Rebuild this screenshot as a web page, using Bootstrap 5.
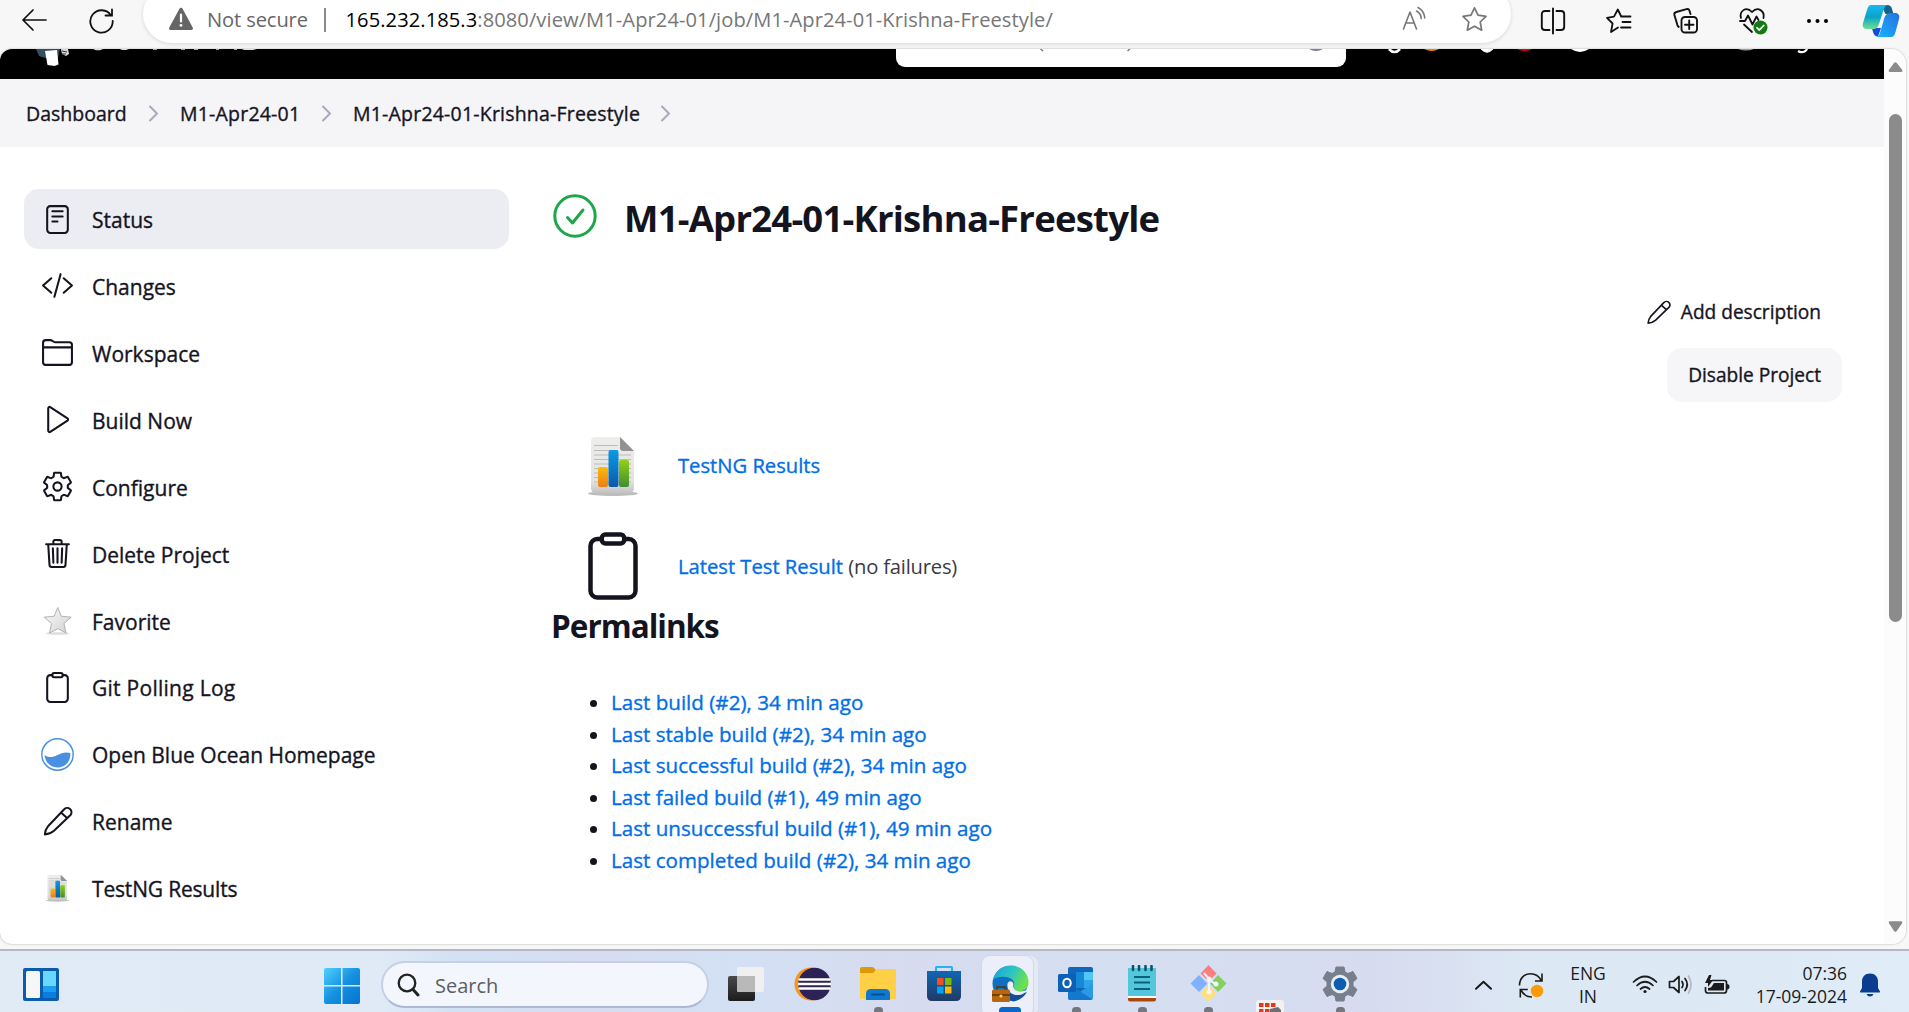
<!DOCTYPE html>
<html lang="en">
<head>
<meta charset="utf-8">
<meta name="viewport" content="width=device-width, initial-scale=1">
<title>M1-Apr24-01-Krishna-Freestyle [Jenkins]</title>
<link rel="stylesheet" href="https://cdn.jsdelivr.net/npm/bootstrap@5.3.0/dist/css/bootstrap.min.css">
<style>
body{height:1012px;overflow:hidden;background:#f7f7f7;color:#14141f;font-family:"Open Sans","Noto Sans",sans-serif;font-size:21px;line-height:1.5;white-space:nowrap}
svg{display:block;flex:none}
a{color:#006fe6;text-decoration:none;font-weight:500}
/* medium weight for links, menu entries and buttons */
a,.crumbs{-webkit-text-stroke:.35px currentColor}
.line-ico{fill:none;stroke:currentColor;stroke-width:32;stroke-linecap:round;stroke-linejoin:round}
/* browser toolbar */
.toolbar{height:49px;padding-left:21px}
.refresh-ico{margin-left:41px}
.address{width:1368px;height:58px;margin:-15px 0 6px 28px;padding:14px 23px 0 25px;border-radius:29px;background:#fff;box-shadow:0 1px 4px rgba(0,0,0,.13);font-size:20.1px}
.address-row{height:40px}
.address-row span{padding-top:2px}
.not-secure{color:#666;margin-left:13px;width:101px;letter-spacing:-.1px}
.addr-sep{width:1.5px;height:24px;background:#8a8a8a;margin:2px 20px 0 16px}
.url{color:#767676;letter-spacing:.08px}
.url b{font-weight:400;color:#000}
.tools{height:41px}
/* page frame */
.page-frame{width:1906px;height:895px;background:#fff;border-radius:12px 15px 14px 12px;box-shadow:0 0 2px rgba(0,0,0,.35);overflow:hidden}
.page-body{width:1884px}
.top-header{height:30px;background:#000;overflow:hidden}
.crumbs{height:68px;background:#f5f5f8;padding-left:26px;font-size:19.5px;font-weight:500}
.crumbs span{padding-top:2px}
.crumbs span+svg+span{letter-spacing:.2px}
.crumbs svg{margin:0 21px 0 22px}
.side{width:485px;margin:42px 0 0 24px;gap:6.9px}
.task-link{height:60px;border-radius:15px;padding-left:17px;gap:18px;color:#14141f;font-weight:500}
.task-link.current{background:#ecedf3}
.task-link span{padding-top:4px}
.wider{letter-spacing:.27px}
.tighter{letter-spacing:-.18px}
.main-col{margin-left:43px;width:1290px;padding-top:42px}
.job-title{font-size:36.5px;font-weight:700;line-height:54px;letter-spacing:-.78px;margin:2px 0 0 27px}
.actions{gap:9px;margin-top:40px}
.act{height:54px;padding:1px 21px 0;border-radius:15px;font-size:19.1px}
.act-grey{background:#f6f6f9}
.result-row{height:72px;gap:29px;padding-left:25px;font-size:20.2px}
.fail-note span{color:#3a3a44;letter-spacing:-.2px}
.perma-title{font-size:31.5px;font-weight:700;line-height:48px;letter-spacing:-1px;margin:0 0 0 -1px}
.perma-list{margin:37px 0 0;padding-left:59px;font-size:20.6px;line-height:31.5px}
.scroller{width:22px;background:#fcfcfc;padding:13px 4px 12px 4px}
.thumb{width:13px;height:508px;border-radius:7px;background:#8b8b8b;margin:42px 0 auto 1px}
/* taskbar */
.taskbar{height:63px;margin-top:5px;border-top:2px solid #b3b8c4;background:linear-gradient(90deg,#e0ebf6 0,#dfeaf6 20%,#d3e1f5 24%,#d6dcf1 31%,#d3e0f4 38%,#d7dbef 48%,#d5dff2 58%,#d7dbef 72%,#dce8f4 80%,#ddeaf6 92%,#e0edf8 100%);color:#1b1b1b}
.search-pill{width:328px;height:47px;margin:10px 0 0 21px;border:2px solid #c6cfe3;border-bottom-color:#aeb8cf;border-radius:24px;background:#f3f6fc;padding-left:14px;font-size:20px;color:#5b5e66}
.search-pill span{padding-top:2px;margin-left:15px}
.cell{width:66px;height:61px;padding-top:4px}
.cell::after{content:"";position:absolute;width:9px;height:7px;border-radius:4px;background:#74777f;top:56px;left:29px;visibility:hidden}
.cell.running::after{visibility:visible}
.cell.front::after{visibility:visible;width:22px;left:22px;background:#0a66c8}
.cell.front::before{content:"";position:absolute;left:5px;top:5px;width:51px;height:60px;border-radius:8px;background:#eceffa;box-shadow:0 0 0 1px #d3d7e8,5px 0 0 #e5e9f5}
.cell svg{position:relative;z-index:1}
.tray{font-size:17.5px;line-height:23px}
</style>
</head>
<body>
<header class="toolbar d-flex">
  <div class="d-flex align-items-center tools">
    <svg width="26" height="24" viewBox="0 0 26 24" fill="none" stroke="#111" stroke-width="1.700" stroke-linecap="round" stroke-linejoin="round"><path d="M25 11H2M12 1L2 11l10 10"/></svg>
    <svg class="refresh-ico" width="27" height="26" viewBox="0 0 27 26" fill="none" stroke="#111" stroke-width="1.800" stroke-linecap="round"><path d="M23 7.500A11.200 11.200 0 1 0 24.700 13M24 1.500v6h-6.500"/></svg>
  </div>
  <div class="address">
    <div class="address-row d-flex align-items-center">
      <svg width="26" height="24" viewBox="0 0 26 24"><path d="M13 .8c.8 0 1.300.4 1.700 1.100l10 18.600c.7 1.300 0 2.500-1.400 2.500H2.700C1.300 23 .6 21.800 1.300 20.500l10-18.600C11.700 1.200 12.200.8 13 .8z" fill="#666"/><path d="M13 7.500v7" stroke="#fff" stroke-width="2.200" stroke-linecap="round"/><circle cx="13" cy="18.300" r="1.400" fill="#fff"/></svg>
      <span class="not-secure">Not secure</span>
      <span class="addr-sep"></span>
      <span class="url"><b>165.232.185.3</b>:8080/view/M1-Apr24-01/job/M1-Apr24-01-Krishna-Freestyle/</span>
      <svg class="ms-auto" width="26" height="26" viewBox="0 0 26 26" fill="none" stroke="#777" stroke-width="1.600" stroke-linecap="round" stroke-linejoin="round"><path d="M1.500 23L8 6l6.500 17M3.700 17h8.600M14.500 5c3 1.500 4.500 4 4.700 7.500M16 1.500c4 2 6.300 5.500 6.800 10.500"/></svg>
      <svg style="margin-left:33px" width="27" height="26" viewBox="0 0 27 26" fill="none" stroke="#777" stroke-width="1.700" stroke-linejoin="round"><path d="M13.500 1.800l3.500 7.400 8 1.100-5.800 5.700 1.500 8.200-7.200-4-7.200 4L7.800 16 2 10.300l8-1.100z"/></svg>
    </div>
  </div>
  <div class="d-flex align-items-center tools" style="margin-left:28px">
    <svg width="28" height="28" viewBox="0 0 28 28" fill="none" stroke="#111" stroke-width="1.900" stroke-linecap="round"><path d="M14 1.500v25M10.500 4H6C4 4 2.800 5.200 2.800 7v13c0 1.800 1.200 3 3.200 3h4.500M17.500 4H22c2 0 3.200 1.200 3.200 3v13c0 1.800-1.200 3-3.200 3h-4.500"/></svg>
    <svg style="margin-left:38px" width="28" height="28" viewBox="0 0 28 28" fill="none" stroke="#111" stroke-width="1.800" stroke-linecap="round" stroke-linejoin="round"><path d="M16 9.500h9.500M17.500 15h8M16 20.500h9.500M13 20.500l-7 4.500 1.600-8.500L2 10.800l7-1.100 3.800-7.200 3.200 6.500"/></svg>
    <svg style="margin-left:39px" width="28" height="28" viewBox="0 0 28 28" fill="none" stroke="#111" stroke-width="1.900" stroke-linecap="round" stroke-linejoin="round"><rect x="9.500" y="10" width="15.500" height="15.500" rx="3.500"/><path d="M17.200 13.500v8.500M13 17.800h8.500M18.500 7l-1-3.200c-.5-1.500-1.500-2-3-1.600L4.300 5C2.700 5.500 2 6.600 2.400 8.100l3 10c.3.900.7 1.400 1.300 1.800"/></svg>
    <svg style="margin-left:38px" width="30" height="30" viewBox="0 0 30 30" fill="none" stroke="#111" stroke-width="1.800" stroke-linecap="round" stroke-linejoin="round"><path d="M3 12C1 5.500 8-.5 14 6c6-6.500 13-.5 11.500 6M2 15h5l3-5.500 4.500 9 4-8 2 3.500M6 18.500L14 26"/><circle cx="22.500" cy="21.500" r="7" fill="#127a12" stroke="none"/><path d="M19 21.800l2.400 2.200 4.300-4.500" stroke="#fff"/></svg>
    <svg style="margin-left:38px" width="24" height="6" viewBox="0 0 24 6"><circle cx="3" cy="3" r="2"/><circle cx="11.500" cy="3" r="2"/><circle cx="20" cy="3" r="2"/></svg>
    <svg style="margin-left:32px" width="38" height="38" viewBox="0 -1 38 38">
      <defs><linearGradient id="cpA" x1="0" y1="0" x2="0" y2="1"><stop offset="0" stop-color="#18b9ee"/><stop offset=".5" stop-color="#0aa3c8"/><stop offset="1" stop-color="#6fe08f"/></linearGradient><linearGradient id="cpB" x1="1" y1="0" x2="0" y2="1"><stop offset="0" stop-color="#2a6fe0"/><stop offset="1" stop-color="#12b7fb"/></linearGradient></defs>
      <path d="M19 2h6c3 0 4 1 5 4l1.500 5h-8z" fill="#12628c"/><path d="M10 25h9l-3 8.500c-3-.2-4-1.500-5-4.500z" fill="#1849d8"/>
      <path d="M9 2h17c-2.500.5-3.500 2-4.500 5l-4.500 14c-1 3-2.500 5-6 5H5c-3.500 0-5-2.500-4-6L5 7c1-3.500 2-5 4-5z" fill="url(#cpA)"/>
      <path d="M29 34H14c2.500-.5 3.500-2 4.300-5L22 16c1-3.500 3-6 6.500-6H33c3.500 0 5 2.500 4 6l-3.500 13c-1 3.500-2 5-4.500 5z" fill="url(#cpB)"/></svg>
  </div>
</header>

<div class="page-frame d-flex">
  <div class="page-body">
    <div class="top-header">
      <svg width="1884" height="30" viewBox="0 0 1884 30">
        <path d="M36 0h24l-2 9-13 0-6-2z" fill="#335061"/><path d="M45 2l12-1 1.500 14.500-4 1.500-7-1z" fill="#fff"/><path d="M61 0h7l1 5-3 2-4-2z" fill="#d9d9d9"/><path d="M62 2l5 1M62 5l4 0" stroke="#333"/>
        <path d="M93 0h10l-3 1.200h-4zM120 0h9l-3 1.100h-4zM153 0h4v.7h-4zM181 0h4v.7h-4zM194 0h4v.7h-4zM216 0h3v.7h-3zM234 0h3v.7h-3zM242 0h15l-4 1h-9z" fill="#ddd"/>
        <path d="M896 0h450v9a9 9 0 0 1-9 9H905a9 9 0 0 1-9-9z" fill="#fff"/>
        <path d="M1040.500 0l2.500 2M1130 0l-2.500 2" stroke="#777" stroke-width="1.400"/>
        <path d="M1309 0h14q-7 4-14 0z" fill="#7b7b9a"/>
        <path d="M1389 0q5.500 6 11 0" fill="none" stroke="#fff" stroke-width="2.600"/><path d="M1424 0h15q-7 4-15 0z" fill="#fb8200"/>
        <path d="M1481 0q6 6.500 12 0" fill="#fff" stroke="#fff"/><path d="M1517 0h15q-7 4-15 0z" fill="#e6001f"/>
        <path d="M1571 0h18q-9 6-18 0z" fill="#fff"/><path d="M1738 0h16q-8 3-16 0z" fill="#999"/>
        <path d="M1798 2q3 2 6.500.5 2-1 2.500-2.500" fill="none" stroke="#fff" stroke-width="2.200"/>
      </svg>
    </div>
    <nav class="crumbs d-flex align-items-center">
      <span style="width:100px">Dashboard</span>
      <svg width="11" height="17" viewBox="0 0 11 17" fill="none" stroke="#a9a9bd" stroke-width="2" stroke-linecap="round" stroke-linejoin="round"><path d="M2 1.500l7 7-7 7"/></svg>
      <span style="width:119px">M1-Apr24-01</span>
      <svg width="11" height="17" viewBox="0 0 11 17" fill="none" stroke="#a9a9bd" stroke-width="2" stroke-linecap="round" stroke-linejoin="round"><path d="M2 1.500l7 7-7 7"/></svg>
      <span style="width:285px">M1-Apr24-01-Krishna-Freestyle</span>
      <svg width="11" height="17" viewBox="0 0 11 17" fill="none" stroke="#a9a9bd" stroke-width="2" stroke-linecap="round" stroke-linejoin="round"><path d="M2 1.500l7 7-7 7"/></svg>
    </nav>
    <div class="d-flex">
      <nav class="side d-flex flex-column">
        <a class="task-link current d-flex align-items-center" href="#"><svg class="line-ico" width="33" height="33" viewBox="0 0 512 512"><rect x="96" y="48" width="320" height="416" rx="48"/><path d="M176 128h160M176 208h160M176 288h80"/></svg><span>Status</span></a>
        <a class="task-link d-flex align-items-center" href="#"><svg class="line-ico" width="33" height="33" viewBox="0 0 512 512"><path d="M160 368L32 256l128-112M352 368l128-112-128-112M304 80l-96 352"/></svg><span>Changes</span></a>
        <a class="task-link d-flex align-items-center" href="#"><svg class="line-ico" width="33" height="33" viewBox="0 0 512 512"><path d="M440 448H72a40 40 0 01-40-40V104a40 40 0 0140-40h75.890a40 40 0 0122.190 6.720l27.840 18.560a40 40 0 0022.190 6.720H440a40 40 0 0140 40v272a40 40 0 01-40 40zM32 176h448"/></svg><span>Workspace</span></a>
        <a class="task-link d-flex align-items-center" href="#"><svg class="line-ico" width="33" height="33" viewBox="0 0 512 512"><path d="M112 84v344c0 17.440 17 28.520 31 20.160l267.900-175.370c12.120-7.250 12.120-26.330 0-33.580L143 63.840c-14-8.360-31 2.720-31 20.160z"/></svg><span>Build Now</span></a>
        <a class="task-link d-flex align-items-center" href="#"><svg class="line-ico" width="33" height="33" viewBox="0 0 512 512"><circle cx="256" cy="256" r="64"/><path d="M416.390 256a154.340 154.340 0 01-1.530 20.790l45.210 35.460a10.810 10.810 0 012.450 13.750l-42.770 74a10.810 10.810 0 01-13.140 4.590l-44.900-18.080a16.110 16.110 0 00-15.170 1.750A164.480 164.480 0 01325 400.800a15.940 15.940 0 00-8.820 12.140l-6.730 47.890a11.080 11.080 0 01-10.680 9.170h-85.540a11.110 11.110 0 01-10.690-8.870l-6.720-47.820a16.070 16.070 0 00-9-12.220 155.300 155.300 0 01-21.460-12.570 16 16 0 00-15.110-1.710l-44.890 18.070a10.810 10.810 0 01-13.140-4.580l-42.770-74a10.800 10.800 0 012.450-13.750l38.210-30a16.050 16.050 0 006-14.080c-.36-4.170-.58-8.330-.58-12.500s.21-8.270.58-12.350a16 16 0 00-6.070-13.940l-38.190-30A10.810 10.810 0 0149.480 186l42.770-74a10.810 10.810 0 0113.140-4.590l44.900 18.080a16.110 16.110 0 0015.170-1.750A164.480 164.480 0 01187 111.200a15.940 15.940 0 008.820-12.140l6.730-47.890A11.080 11.080 0 01213.230 42h85.540a11.110 11.110 0 0110.690 8.870l6.720 47.820a16.070 16.070 0 009 12.220 155.300 155.300 0 0121.460 12.570 16 16 0 0015.110 1.710l44.890-18.070a10.810 10.810 0 0113.140 4.580l42.770 74a10.800 10.800 0 01-2.450 13.750l-38.210 30a16.050 16.050 0 00-6.050 14.080c.33 4.140.55 8.300.55 12.470z"/></svg><span>Configure</span></a>
        <a class="task-link d-flex align-items-center" href="#"><svg class="line-ico" width="33" height="33" viewBox="0 0 512 512"><path d="M112 112l20 320c.95 18.490 14.400 32 32 32h184c17.670 0 30.870-13.510 32-32l20-320M80 112h352M192 112V72a23.930 23.930 0 0124-24h80a23.930 23.930 0 0124 24v40M256 176v224M184 176l8 224M328 176l-8 224"/></svg><span>Delete Project</span></a>
        <a class="task-link d-flex align-items-center" href="#"><svg width="33" height="33" viewBox="0 0 33 33"><defs><linearGradient id="st" x1="0" y1="0" x2="1" y2="1"><stop offset="0" stop-color="#fafafa"/><stop offset="1" stop-color="#d2d2d2"/></linearGradient></defs><ellipse cx="16.500" cy="29.500" rx="12" ry="1.300" fill="#ddd"/><path d="M16.800 3.500l3.400 8.700 10 1-7.300 6.300 2.200 9.500-8.300-4.300L8.500 29l2-9.500-7.300-6.300 10-1z" fill="url(#st)" stroke="#aaa" stroke-width=".9"/></svg><span>Favorite</span></a>
        <a class="task-link d-flex align-items-center" href="#"><svg class="line-ico" width="33" height="33" viewBox="0 0 512 512"><path d="M336 64h32a48 48 0 0148 48v320a48 48 0 01-48 48H144a48 48 0 01-48-48V112a48 48 0 0148-48h32"/><rect x="176" y="32" width="160" height="64" rx="26.130"/></svg><span class="wider">Git Polling Log</span></a>
        <a class="task-link d-flex align-items-center" href="#"><svg width="33" height="33" viewBox="0 0 33 33"><circle cx="16.500" cy="16.500" r="15.700" fill="#fff" stroke="#4a90e2" stroke-width="1.500"/><path d="M3.500 17c3.500 2.500 8 2.800 12.500.3 4.500-2.600 8.500-3.600 13.300-2.300.8 7.500-4.500 14.500-12.800 14.500C9.500 29.500 4 24 3.500 17z" fill="#4a90e2"/></svg><span>Open Blue Ocean Homepage</span></a>
        <a class="task-link d-flex align-items-center" href="#"><svg width="33" height="33" viewBox="0 0 33 33" fill="none" stroke="currentColor" stroke-width="2" stroke-linejoin="round"><path d="M3.800 29.500c.3-3.500 1.200-6 3.200-8.200L23 4.500a4 4 0 0 1 6.500 5.500L13 25.800c-2.200 2-5.200 3.500-9.200 3.700zM20 7.600l6 5.500"/></svg><span>Rename</span></a>
        <a class="task-link d-flex align-items-center" href="#"><svg width="33" height="33" viewBox="0 0 72 72"><use href="#report"/></svg><span class="tighter">TestNG Results</span></a>
      </nav>
      <main class="main-col">
        <div class="d-flex">
          <svg style="margin-top:5px" width="45" height="45" viewBox="0 0 45 45" fill="none" stroke="#1ea64b" stroke-linecap="round" stroke-linejoin="round"><circle cx="23" cy="22" r="20.200" stroke-width="3"/><path d="M15.500 23.500l5 5.500 10.500-13" stroke-width="3"/></svg>
          <h1 class="job-title">M1-Apr24-01-Krishna-Freestyle</h1>
        </div>
        <div class="actions d-flex flex-column align-items-end">
          <a class="act d-flex align-items-center text-reset" href="#"><svg class="me-2" width="29" height="27" viewBox="0 0 33 33" fill="none" stroke="currentColor" stroke-width="2" stroke-linejoin="round"><path d="M3.800 29.500c.3-3.500 1.200-6 3.200-8.200L23 4.500a4 4 0 0 1 6.500 5.500L13 25.800c-2.200 2-5.200 3.500-9.200 3.700zM20 7.600l6 5.500"/></svg><span>Add description</span></a>
          <a class="act act-grey d-flex align-items-center text-reset" href="#"><span>Disable Project</span></a>
        </div>
        <div class="result-row d-flex align-items-center" style="margin-top:27px">
          <svg width="72" height="72" viewBox="0 0 72 72"><defs>
            <linearGradient id="pg" x1="0" y1="0" x2="0" y2="1"><stop offset="0" stop-color="#eeeeec"/><stop offset=".8" stop-color="#e2e2e2"/><stop offset="1" stop-color="#c2c2c2"/></linearGradient>
            <linearGradient id="or" x1="0" y1="0" x2="0" y2="1"><stop offset="0" stop-color="#fdbb0a"/><stop offset="1" stop-color="#ee7d12"/></linearGradient>
            <linearGradient id="bl" x1="0" y1="0" x2="0" y2="1"><stop offset="0" stop-color="#0a9be6"/><stop offset="1" stop-color="#0a5aa8"/></linearGradient>
            <linearGradient id="gn" x1="0" y1="0" x2="0" y2="1"><stop offset="0" stop-color="#95cf12"/><stop offset="1" stop-color="#3c8f32"/></linearGradient></defs>
            <g id="report"><ellipse cx="36" cy="64.500" rx="25" ry="2.500" fill="#bdbdbd"/><path d="M18 8h25l14 14v37q0 5-5 5H19q-5 0-5-5V12q0-4 4-4z" fill="url(#pg)"/><path d="M43 8l14 14H46q-3 0-3-3z" fill="#929292"/><path d="M17 16.500h24M17 21.500h24M17 26h37M17 30.500h37M17 35h37M17 39.500h37M17 44h37M17 48.500h37M17 53h37" stroke="#bcbcbc" stroke-width="1.200"/><rect x="21" y="38" width="10" height="20" rx="2" fill="url(#or)"/><rect x="31.500" y="21" width="10" height="37" rx="2" fill="url(#bl)"/><rect x="42" y="31" width="10" height="27" rx="2" fill="url(#gn)"/></g></svg>
          <a href="#">TestNG Results</a>
        </div>
        <div class="result-row d-flex align-items-center" style="margin-top:29px">
          <svg class="line-ico" width="72" height="72" viewBox="0 0 512 512"><path d="M336 64h32a48 48 0 0148 48v320a48 48 0 01-48 48H144a48 48 0 01-48-48V112a48 48 0 0148-48h32"/><rect x="176" y="32" width="160" height="64" rx="26.130"/></svg>
          <div class="fail-note"><a href="#">Latest Test Result</a> <span>(no failures)</span></div>
        </div>
        <h2 class="perma-title">Permalinks</h2>
        <ul class="perma-list">
          <li><a href="#">Last build (#2), 34 min ago</a></li>
          <li><a href="#">Last stable build (#2), 34 min ago</a></li>
          <li><a href="#">Last successful build (#2), 34 min ago</a></li>
          <li><a href="#">Last failed build (#1), 49 min ago</a></li>
          <li><a href="#">Last unsuccessful build (#1), 49 min ago</a></li>
          <li><a href="#">Last completed build (#2), 34 min ago</a></li>
        </ul>
      </main>
    </div>
  </div>
  <div class="scroller d-flex flex-column">
    <svg width="15" height="10" viewBox="0 0 15 10"><path d="M6.200.8q1.200-1.300 2.400 0l5.500 7q1 2-1 2.200H2q-2-.2-1-2.200z" fill="#8b8b8b"/></svg>
    <div class="thumb"></div>
    <svg width="15" height="11" viewBox="0 0 15 11"><path d="M6.200 10.200q1.200 1.300 2.400 0l5.500-8Q15 .2 13 .2H2Q0 .2 1 2.200z" fill="#8b8b8b"/></svg>
  </div>
</div>

<footer class="taskbar d-flex">
  <svg style="margin:17px 0 0 23px" width="36" height="33" viewBox="0 0 36 33"><rect width="36" height="33" rx="2" fill="#0b5cad"/><rect x="3" y="3" width="14" height="27" rx="1.500" fill="#f6f6f6"/><rect x="20" y="3" width="13" height="15" fill="#69d8ff"/><rect x="20" y="18" width="13" height="6" fill="#1b9df0"/><rect x="20" y="24" width="13" height="6" fill="#0a7de0"/></svg>
  <svg style="margin:17px 0 0 265px" width="36" height="36" viewBox="0 0 36 36"><defs><linearGradient id="wn" gradientUnits="userSpaceOnUse" x1="0" y1="0" x2="36" y2="36"><stop offset="0" stop-color="#4fd0ff"/><stop offset=".5" stop-color="#1591e0"/><stop offset="1" stop-color="#0574cf"/></linearGradient></defs><path d="M2 0h15v17H0V2q0-2 2-2zM18.500 0H34q2 0 2 2v15H18.500zM0 18.500h17V36H2q-2 0-2-2zM18.500 18.500H36V34q0 2-2 2H18.500z" fill="url(#wn)"/></svg>
  <div class="search-pill d-flex align-items-center"><svg width="23" height="24" viewBox="0 0 23 24" fill="none" stroke="#222" stroke-linecap="round"><circle cx="10" cy="10" r="8.300" stroke-width="2.300"/><path d="M16 16.500l5 5.500" stroke-width="3"/></svg><span>Search</span></div>
  <div class="d-flex" style="margin-left:4px">
    <div class="cell position-relative d-flex justify-content-center align-items-center"><svg width="36" height="34" viewBox="0 0 36 34"><defs><linearGradient id="tv" x1="0" y1="0" x2="0" y2="1"><stop offset="0" stop-color="#4a4a4a"/><stop offset="1" stop-color="#1c1c1c"/></linearGradient></defs><rect y="9" width="27" height="25" rx="2" fill="url(#tv)"/><rect x="9" width="27" height="25" rx="2" fill="#f0f0f0"/><path d="M9 9h18v16H11q-2 0-2-2z" fill="#b9b9b9"/></svg></div>
    <div class="cell position-relative d-flex justify-content-center align-items-center"><svg width="37" height="34" viewBox="0 0 37 34"><circle cx="17" cy="17" r="16.500" fill="#f7941e"/><circle cx="20.500" cy="17" r="16.300" fill="#2c2255"/><path d="M4.500 12.500h32M4 17h33M4.500 21.500h32" stroke="#fff" stroke-width="2.300"/></svg></div>
    <div class="cell running position-relative d-flex justify-content-center align-items-center"><svg width="36" height="33" viewBox="0 0 36 33"><path d="M0 2q0-2 2-2h10q2 0 3 2l2 4H0z" fill="#dd9a06"/><path d="M0 6h13l4-4h17q2 0 2 2v28H2q-2 0-2-2z" fill="#ffcf45"/><path d="M6 33v-6q0-5 5-5h14q5 0 5 5v6z" fill="#0f78cf"/><path d="M12 27.500h12" stroke="#0a4f96" stroke-width="2" stroke-linecap="round"/></svg></div>
    <div class="cell position-relative d-flex justify-content-center align-items-center"><svg width="36" height="36" viewBox="0 0 36 36"><defs><linearGradient id="ms" x1="0" y1="0" x2="0" y2="1"><stop offset="0" stop-color="#0f66b4"/><stop offset="1" stop-color="#203a66"/></linearGradient></defs><path d="M10 6V2q0-1 1-1h14q1 0 1 1v4" fill="none" stroke="#27b5f2" stroke-width="2.200"/><path d="M1 5h34v25q0 5-5 5H6q-5 0-5-5z" fill="url(#ms)"/><path d="M11 12h6.500v7H11z" fill="#f25022"/><path d="M19 12h6.500v7H19z" fill="#7fba00"/><path d="M11 20.500h6.500v7H11z" fill="#00a4ef"/><path d="M19 20.500h6.500v7H19z" fill="#ffb900"/></svg></div>
    <div class="cell front position-relative d-flex justify-content-center align-items-center"><svg width="37" height="37" viewBox="0 0 37 37"><defs><linearGradient id="ed" x1="0" y1="0" x2="1" y2=".4"><stop offset="0" stop-color="#1a9fd8"/><stop offset=".55" stop-color="#2cc5c4"/><stop offset="1" stop-color="#6fe04c"/></linearGradient></defs><circle cx="18" cy="18.500" r="17.500" fill="#0f6fc0"/><path d="M1 15C3 6 10 .5 18.500.5 29 .5 36.500 8 36.500 17c0 6-4 9.500-9 9.500-4 0-7-2-6-4.500 2-4 0-8-5-9.500C10.500 11 4 12 1 15z" fill="url(#ed)"/><path d="M16 18c-1 8 5 14.500 19 9-3 5-8 9-14 9.500-7-3-9-13-5-18.500z" fill="#124f96"/><path d="M15.500 18.500c2-4 6-2 6 1-1 3 .5 6.500 6 7 4 0 7-1 8-2.500-2 4-5 6-10 6-7 0-11-5-10-11.500z" fill="#eceffa"/><rect x="0" y="24.500" width="18" height="12.500" rx="1.500" fill="#b5680f"/><path d="M5 24.500v-2.500h8v2.500M0 30h18" fill="none" stroke="#5d3007" stroke-width="1.500"/><circle cx="9" cy="31" r="1.600" fill="#ffd34a"/></svg></div>
    <div class="cell running position-relative d-flex justify-content-center align-items-center"><svg width="36" height="33" viewBox="0 0 36 33"><rect x="10" width="25" height="29" rx="2" fill="#1066b8"/><path d="M18 5h8v8h-8zM18 21h8v-8h-8z" fill="#1588d6"/><path d="M26 5h9v8h-9z" fill="#50c8f5"/><path d="M26 13h9v8h-9z" fill="#2ea5e8"/><path d="M10 17l12 8 13-9v15q0 2-2 2H12q-2 0-2-2z" fill="#2b9ae4"/><path d="M10 17l24 15q-1 1-2 1H12q-2 0-2-2z" fill="#1478cf"/><rect y="7" width="18" height="18" rx="1.500" fill="#0c60b8"/><ellipse cx="9" cy="16" rx="3.700" ry="4.200" fill="none" stroke="#fff" stroke-width="2"/></svg></div>
    <div class="cell running position-relative d-flex justify-content-center align-items-center"><svg width="28" height="37" viewBox="0 0 28 37"><rect y="31" width="28" height="5.500" rx="2" fill="#a8480f"/><path d="M0 3h28v30H0z" fill="#54c6da"/><path d="M0 31h28v2H0z" fill="#fff"/><path d="M5 1v4M11 1v4M17.500 1v4M23.500 1v4" stroke="#07566d" stroke-width="2.600" stroke-linecap="round"/><path d="M6 12h16M6 17.500h16M6 24h16" stroke="#07627b" stroke-width="2.200"/></svg></div>
    <div class="cell running position-relative d-flex justify-content-center align-items-center"><svg width="37" height="37" viewBox="0 0 37 37"><path d="M18.500 0l8 8.500-8 8-8-8z" fill="#ff7d7d"/><path d="M28 10l8.500 8.500L28 27l-8-8.500z" fill="#85cf5c"/><path d="M18.500 20l8 8-8 9-8-9z" fill="#ffe07a"/><path d="M9 10l8.500 8.500L9 27 .5 18.500z" fill="#80b1ff"/><path d="M14 8l5 6v14M19 14l7 6" fill="none" stroke="#f2f4fb" stroke-width="2"/><circle cx="19" cy="14" r="2.500" fill="#f2f4fb"/><circle cx="26" cy="19" r="2.500" fill="#f2f4fb"/><circle cx="19" cy="27" r="2.500" fill="#f2f4fb"/></svg></div>
    <div class="cell position-relative d-flex justify-content-center"><svg style="margin:45px 8px 0 0" width="28" height="14" viewBox="0 0 28 14"><rect width="28" height="20" rx="3" fill="#f4f1f1"/><path d="M3 3h4.500v4H3zM9 3h4.500v4H9zM15 3h4.500v4H15zM3 9h4.500v4H3zM9 9h4.500v4H9z" fill="#e23a12"/><path d="M14 9l8-2 3 3v4H14z" fill="#6e6e70"/></svg></div>
    <div class="cell running position-relative d-flex justify-content-center align-items-center"><svg width="38" height="36" viewBox="0 0 38 36"><path d="M15 1h8l1 5 3 1.500 5-2 4 7-4 3.500v4l4 3.500-4 7-5-2-3 1.500-1 5h-8l-1-5-3-1.500-5 2-4-7 4-3.500v-4l-4-3.500 4-7 5 2 3-1.500z" fill="#76808c" stroke="#76808c" stroke-linejoin="round"/><circle cx="19" cy="18" r="9.200" fill="#e9edf4"/><circle cx="19" cy="18" r="6.300" fill="#0c5db0"/></svg></div>
  </div>
  <div class="tray d-flex align-items-center" style="margin-left:102px;padding-top:6px">
    <svg width="17" height="10" viewBox="0 0 17 10" fill="none" stroke="#1b1b1b" stroke-width="2" stroke-linecap="round" stroke-linejoin="round"><path d="M1 8.800l7.500-7 7.500 7"/></svg>
    <svg style="margin-left:26px" width="27" height="26" viewBox="0 0 27 26" fill="none" stroke="#1b1b1b" stroke-width="1.600"><path d="M1.500 13.500C1.500 6 6.500 1.800 12.500 1.800c4.500 0 8.500 2.200 11 7M24 1.500v7.500h-7M14 25C9 25 5 22 2.800 18M2.300 25.500v-8h7.500"/><circle cx="19" cy="19" r="6.200" fill="#fd9a08" stroke="none"/></svg>
    <div class="text-center" style="margin-left:24px;width:38px">ENG<br>IN</div>
    <svg style="margin-left:25px" width="26" height="19" viewBox="0 0 26 19" fill="none" stroke="#1b1b1b" stroke-width="1.700" stroke-linecap="round"><path d="M1.500 7Q13-4 24.500 7M5 10.500q8-7.500 16 0M8.500 14q4.500-4 9 0"/><circle cx="13" cy="16.500" r="1.600" fill="#1b1b1b" stroke="none"/></svg>
    <svg style="margin-left:10px" width="26" height="21" viewBox="0 0 26 21" fill="none" stroke="#1b1b1b" stroke-width="1.700" stroke-linecap="round" stroke-linejoin="round"><path d="M1.500 7.500h4l5.500-5v16l-5.500-5h-4zM14 7.500q2 3 0 6M17 4.500q4.500 6 0 12"/><path d="M20.500 2q5 8.500 0 17" stroke="#b4bac4"/></svg>
    <svg style="margin-left:10px" width="26" height="20" viewBox="0 0 26 20"><path d="M8 5.500h12.500q2 0 2 2v8q0 2.500-2.500 2.500H4q-2.500 0-2.500-2.500V12" fill="none" stroke="#1b1b1b" stroke-width="1.700"/><path d="M10 8h10v7.500H4v-2.500l3-.5zM23 9q2.500 0 2.500 2.700T23 14.500z" fill="#1b1b1b"/><path d="M5 0L1 8h3v4l5-7H6l1.500-5z" fill="#1b1b1b"/></svg>
    <div class="text-end" style="margin-left:17px;width:100px">07:36<br>17-09-2024</div>
    <svg style="margin-left:12px" width="22" height="24" viewBox="0 0 22 24"><path d="M11 .5c5 0 8 3.500 8 8v6.500l2 3.500q.3 1-.8 1H1.800q-1.100 0-.8-1L3 15V8.500c0-4.500 3-8 8-8zM7.500 21h7q-1 2.500-3.500 2.500T7.500 21z" fill="#0a3d8f"/></svg>
  </div>
</footer>
<script src="https://cdn.jsdelivr.net/npm/bootstrap@5.3.0/dist/js/bootstrap.bundle.min.js"></script>
</body>
</html>
